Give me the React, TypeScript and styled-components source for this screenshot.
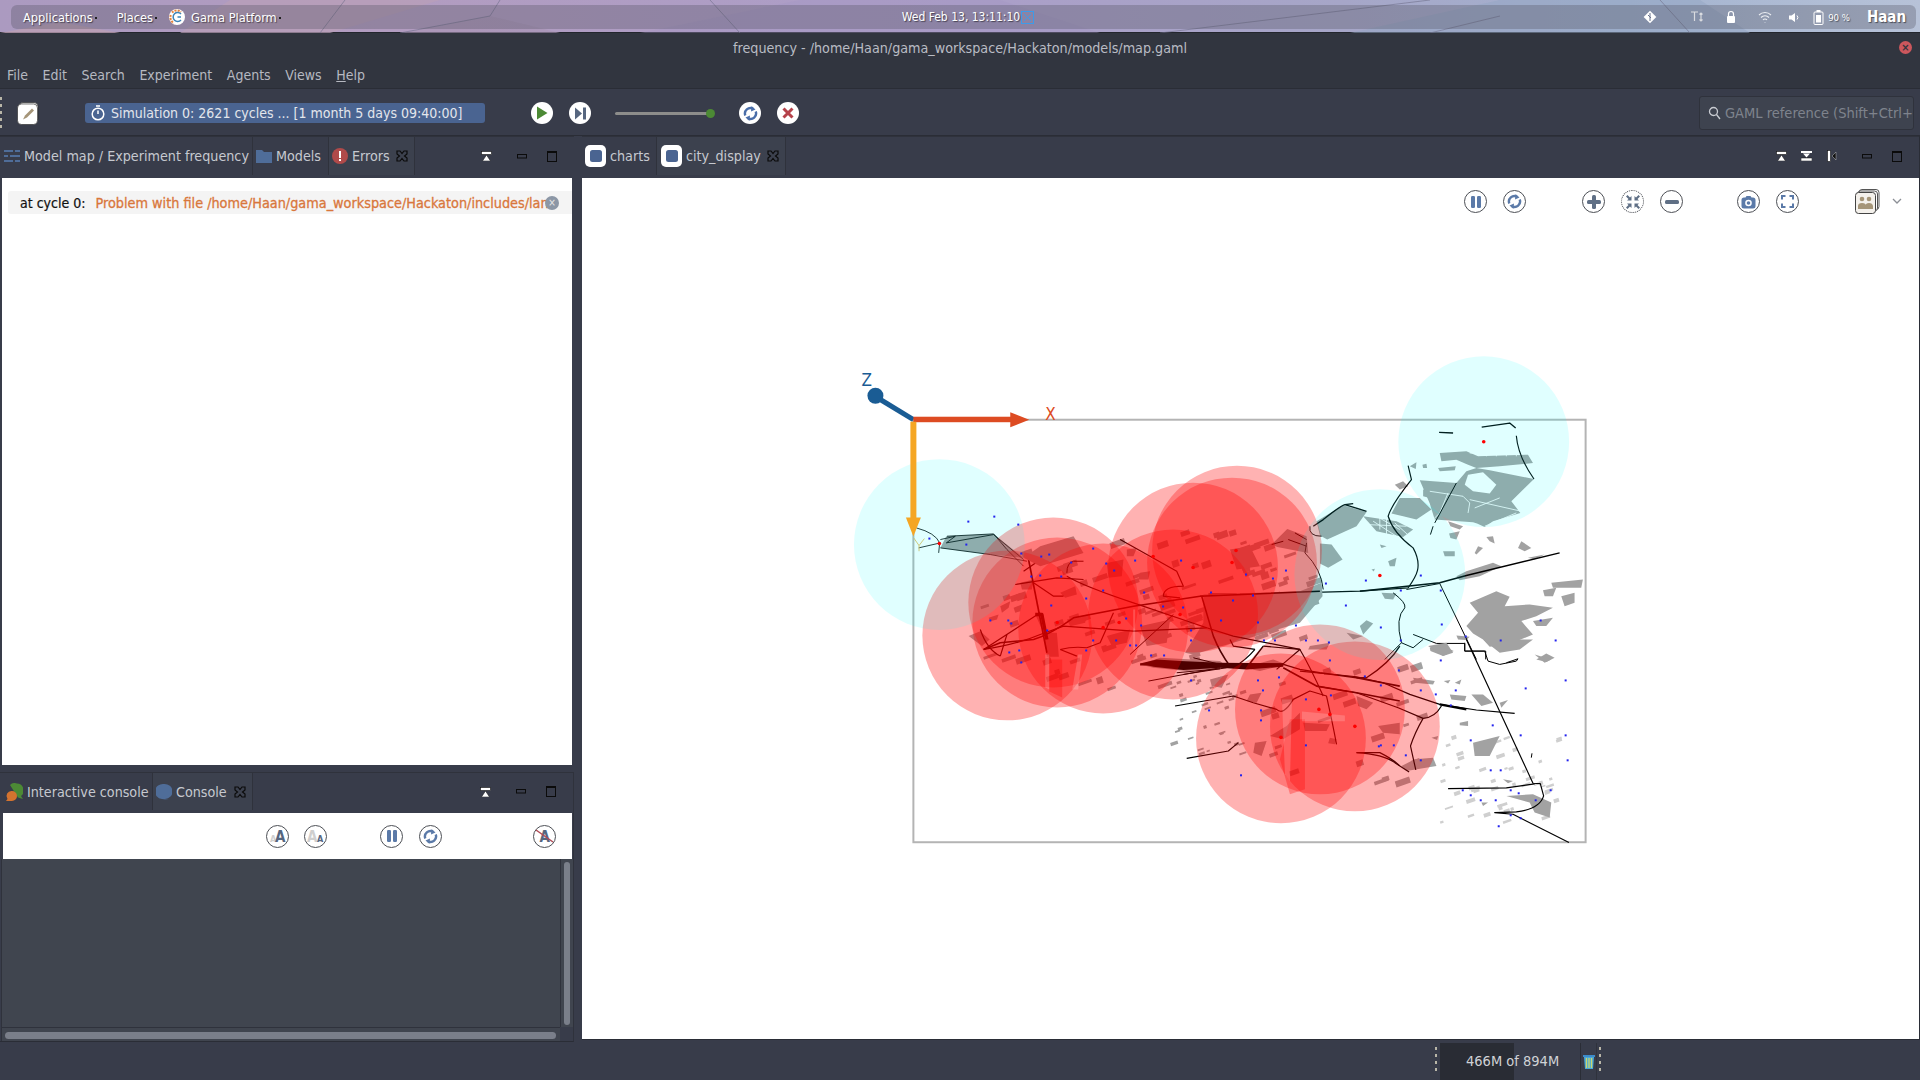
import React from 'react';
import styled, { createGlobalStyle } from 'styled-components';

const GlobalStyle = createGlobalStyle`
  * {
    box-sizing: border-box;
  }
  html, body {
    margin: 0;
    padding: 0;
    width: 1920px;
    height: 1080px;
    overflow: hidden;
    background: #383c4a;
  }
  body {
    font-family: "DejaVu Sans Condensed", "DejaVu Sans", sans-serif;
    font-stretch: condensed;
  }
  svg {
    flex: none;
  }
`;

const Page = styled.div`
  width: 1920px;
  height: 1080px;
  display: flex;
  flex-direction: column;
`;

/* ---------- desktop panel ---------- */

const DesktopBar = styled.div`
  position: relative;
  height: 33px;
  flex: none;
  padding: 5px 4px 4px 11px;
  background: linear-gradient(90deg, #ab9ac0 0%, #b29cc0 20%, #ab9ec8 50%, #a6a6c8 70%, #a3b3cf 85%, #b7c2d8 100%);
  border-bottom: 1px solid #23262d;
`;

const WallpaperLines = styled.svg`
  position: absolute;
  left: 0;
  top: 0;
`;

const DesktopPill = styled.div`
  position: relative;
  height: 24px;
  border-radius: 6px;
  background: rgba(75, 75, 90, 0.3);
  display: grid;
  grid-template-columns: 1fr auto 1fr;
  align-items: center;
  color: #fff;
  font-size: 12px;
  text-shadow: 1px 1px 1px rgba(0, 0, 0, 0.5);
`;

const DesktopLeft = styled.div`
  display: flex;
  align-items: center;
  padding-left: 12px;
  gap: 20px;
  font-size: 12.7px;
`;

const PanelMenu = styled.span`
  display: inline-flex;
  align-items: center;
  gap: 2px;
  &::after {
    content: '';
    width: 2px;
    height: 2px;
    margin-top: 2px;
    background: #222;
  }
`;

const GamaApp = styled.div`
  display: flex;
  align-items: center;
  gap: 6px;
  margin-left: -8px;
`;

const DesktopRight = styled.div`
  display: flex;
  justify-content: flex-end;
  align-items: center;
  padding-right: 10px;
`;

const UserName = styled.span`
  font-size: 15px;
  font-weight: 700;
  margin-left: 17px;
`;

const Percent = styled.span`
  font-size: 9.5px;
  margin-left: 4px;
`;

const TrayIcon = styled.svg<{ $gap?: number }>`
  margin-left: ${({ $gap }) => $gap ?? 0}px;
`;

const Clock = styled.div`
  display: flex;
  align-items: center;
  gap: 1px;
  margin-left: 9px;
`;

/* ---------- window chrome ---------- */

const TitleBar = styled.div`
  height: 29px;
  flex: none;
  position: relative;
  background: #31353f;
  color: #b9bcc4;
  font-size: 14.2px;
  display: flex;
  align-items: center;
  justify-content: center;
`;

const WindowClose = styled.div`
  position: absolute;
  right: 8px;
  top: 8px;
  width: 13px;
  height: 13px;
  border-radius: 50%;
  background: #cc575d;
  color: #31353f;
  font-size: 11px;
  font-weight: 700;
  line-height: 13px;
  text-align: center;
`;

const MenuBar = styled.div`
  height: 27px;
  flex: none;
  background: #31353f;
  border-bottom: 1px solid #2a2d36;
  display: flex;
  align-items: center;
  padding-left: 7px;
  gap: 14.6px;
  color: #b6b9c1;
  font-size: 14px;
`;

const MenuKey = styled.span`
  text-decoration: underline;
`;

const ToolBar = styled.div`
  height: 47px;
  flex: none;
  padding-top: 2px;
  background: #383c4a;
  border-bottom: 1px solid #2a2d36;
  display: flex;
  align-items: center;
  position: relative;
`;

const Handle = styled.div<{ $height: number }>`
  width: 2px;
  height: ${({ $height }) => $height}px;
  flex: none;
  background: repeating-linear-gradient(180deg, #b9b6a8 0 3px, transparent 3px 7px);
`;

const EditIcon = styled.svg`
  margin-left: 15px;
`;

const SimulationPill = styled.div`
  margin-left: 46px;
  width: 400px;
  height: 20px;
  border-radius: 3px;
  background: #4a6491;
  color: #e3e6ec;
  font-size: 14px;
  display: flex;
  align-items: center;
  padding-left: 6px;
  gap: 6px;
  white-space: nowrap;
`;

const PlayGroup = styled.div`
  display: flex;
  align-items: center;
  margin-left: 46px;
  gap: 16px;
`;

const RunControl = styled.div<{ $gap?: number }>`
  width: 22px;
  height: 22px;
  border-radius: 50%;
  background: #fff;
  display: flex;
  align-items: center;
  justify-content: center;
  margin-left: ${({ $gap }) => $gap ?? 0}px;
  flex: none;
`;

const Slider = styled.div`
  position: relative;
  width: 96px;
  height: 3px;
  margin: 0 28px 0 24px;
  background: #8d8d8b;
  border-radius: 2px;
  flex: none;
`;

const SliderThumb = styled.div`
  position: absolute;
  right: -4px;
  top: -3px;
  width: 9px;
  height: 9px;
  border-radius: 50%;
  background: #4c8a35;
`;

const SearchBox = styled.div`
  margin-left: auto;
  margin-right: 6px;
  width: 215px;
  height: 34px;
  background: #3e434f;
  border: 1px solid #2f323c;
  border-radius: 3px;
  display: flex;
  align-items: center;
  padding-left: 8px;
  gap: 4px;
  color: #7f838d;
  font-size: 14.5px;
  white-space: nowrap;
  overflow: hidden;
`;

/* ---------- work area ---------- */

const WorkArea = styled.div`
  flex: 1;
  display: flex;
  min-height: 0;
  background: #383c4a;
`;

const LeftColumn = styled.div`
  width: 574px;
  flex: none;
  display: flex;
  flex-direction: column;
`;

const RightColumn = styled.div`
  flex: 1;
  margin-left: 8px;
  display: flex;
  flex-direction: column;
  height: 904px;
  min-width: 0;
  border-right: 1px solid #2a2d36;
  border-bottom: 1px solid #2a2d36;
`;

const TabBar = styled.div<{ $height: number }>`
  height: ${({ $height }) => $height}px;
  padding-bottom: 3px;
  flex: none;
  display: flex;
  align-items: stretch;
  background: #383c4a;
  border-top: 1px solid #2f323c;
  color: #c6c9d0;
  font-size: 14.2px;
`;

const Tab = styled.div<{ $active?: boolean; $width: number; $pad?: number }>`
  width: ${({ $width }) => $width}px;
  flex: none;
  display: flex;
  align-items: center;
  gap: 4px;
  padding-left: ${({ $pad }) => $pad ?? 3}px;
  white-space: nowrap;
  border-right: 1px solid #2f323c;
  background: ${({ $active }) => ($active ? '#3c414e' : '#383c4a')};
`;

const TabClose = styled.svg`
  margin-left: auto;
  margin-right: 6px;
`;

const TabActions = styled.div`
  margin-left: auto;
  display: flex;
  align-items: center;
`;

const ActionSlot = styled.div<{ $width: number }>`
  width: ${({ $width }) => $width}px;
  display: flex;
  justify-content: center;
  flex: none;
`;

const ErrorPane = styled.div`
  height: 587px;
  flex: none;
  margin: 0 2px 0 2px;
  background: #fff;
  padding: 13px 0 0 6px;
  overflow: hidden;
`;

const ErrorRow = styled.div`
  position: relative;
  height: 23px;
  width: 570px;
  display: flex;
  align-items: center;
  background: #f4f4f4;
  border-radius: 3px;
  font-size: 14px;
  white-space: nowrap;
  padding-left: 12px;
`;

const CycleLabel = styled.span`
  color: #111;
  margin-right: 10px;
  -webkit-text-stroke: 0.2px #111;
`;

const ErrorText = styled.span`
  color: #d9773c;
  font-size: 14.3px;
  -webkit-text-stroke: 0.3px #d9773c;
`;

const ErrorClose = styled.div`
  position: absolute;
  left: 537px;
  top: 5px;
  width: 14px;
  height: 14px;
  border-radius: 50%;
  background: #8c97a6;
  color: #e7e7e7;
  font-size: 10px;
  line-height: 14px;
  text-align: center;
`;

const PaneGap = styled.div`
  height: 7px;
  flex: none;
`;

const ConsolePanel = styled.div`
  flex: none;
  height: 270px;
  display: flex;
  flex-direction: column;
  border-bottom: 1px solid #2a2d36;
  border-right: 1px solid #2f323c;
`;

const ConsoleTools = styled.div`
  height: 46px;
  flex: none;
  margin-left: 3px;
  margin-right: 1px;
  background: #fff;
  display: flex;
  align-items: center;
  padding-left: 263px;
`;

const ConsoleBody = styled.div`
  flex: 1;
  min-height: 0;
  margin-left: 1px;
  display: grid;
  grid-template-columns: 1fr 13px;
  grid-template-rows: 1fr 14px;
  background: #40454f;
  border-left: 1px solid #2f323c;
`;

const ScrollV = styled.div`
  border-left: 1px solid #2f323c;
  padding: 3px 3px 2px;
`;

const ScrollH = styled.div`
  border-top: 1px solid #2f323c;
  padding: 4px 4px 2px 3px;
`;

const ScrollThumb = styled.div`
  width: 100%;
  height: 100%;
  border-radius: 4px;
  background: #7a7f8a;
`;

const ScrollCorner = styled.div`
  background: #383c4a;
`;

const CanvasPane = styled.div`
  flex: 1;
  min-height: 0;
  position: relative;
  background: #fff;
`;

const MapSvg = styled.svg`
  display: block;
  width: 100%;
  height: 100%;
`;

const CanvasTools = styled.div`
  position: absolute;
  top: 11px;
  right: 17px;
  display: flex;
  align-items: center;
  gap: 54px;
`;

const ToolGroup = styled.div<{ $gap?: number; $ml?: number }>`
  display: flex;
  align-items: center;
  gap: ${({ $gap }) => $gap ?? 16}px;
  margin-left: ${({ $ml }) => $ml ?? 0}px;
`;

const RoundButton = styled.div<{ $dim?: boolean }>`
  width: 23px;
  height: 23px;
  border-radius: 50%;
  border: 1px solid #4d5056;
  border-style: ${({ $dim }) => ($dim ? 'dotted' : 'solid')};
  background: #fff;
  display: flex;
  align-items: center;
  justify-content: center;
  flex: none;
`;

const Chevron = styled.svg`
  margin-left: -42px;
`;

/* ---------- status bar ---------- */

const StatusBar = styled.div`
  flex: none;
  height: 38px;
  display: flex;
  align-items: center;
  justify-content: flex-end;
  padding-right: 319px;
  background: #383c4a;
`;

const MemoryBox = styled.div`
  width: 141px;
  height: 37px;
  margin-left: 3px;
  padding-left: 26px;
  display: flex;
  align-items: center;
  background: linear-gradient(90deg, #292c34 0 74px, #383c4a 74px);
  border-right: 1px solid #2a2d36;
  color: #d0d2d6;
  font-size: 14.5px;
`;

const TrashBox = styled.div`
  width: 16px;
  height: 37px;
  display: flex;
  align-items: center;
  justify-content: center;
  border-right: 1px solid #2f323c;
  margin-right: 2px;
`;

/* ---------- small drawings ---------- */

const TabX = () => (
  <TabClose width="12" height="12" viewBox="0 0 12 12" fill="none" stroke="#0b0b0b" strokeWidth="1.200">
    <path d="M1 1h3l2 2.500L8 1h3v3L8.500 6 11 8v3H8L6 8.500 4 11H1V8l2.500-2L1 4z" />
  </TabClose>
);

const ViewMenuIcon = ({ flip }: { flip?: boolean }) => (
  <svg width="11" height="10" viewBox="0 0 11 10">
    {flip ? (
      <g>
        <rect x="0" y="0" width="11" height="2" fill="#fff" />
        <path d="M2 2.500h7L5.500 6.500z" fill="#fff" />
        <rect x="0" y="7" width="11" height="3" fill="#fff" stroke="#111" strokeWidth="0.500" />
      </g>
    ) : (
      <g>
        <rect x="0.500" y="0.500" width="10" height="3" fill="#fff" stroke="#111" strokeWidth="0.600" />
        <path d="M5.500 4l4 6h-8z" fill="#fff" stroke="#111" strokeWidth="0.500" />
      </g>
    )}
  </svg>
);

const SideIcon = () => (
  <svg width="10" height="12" viewBox="0 0 10 12">
    <rect x="0.500" y="0.500" width="3" height="11" fill="#fff" stroke="#111" strokeWidth="0.600" />
    <path d="M9 2v8L5 6z" fill="#111" stroke="#ddd" strokeWidth="0.400" />
  </svg>
);

const MinIcon = () => (
  <svg width="10" height="5" viewBox="0 0 10 5"><rect x="0.500" y="0.500" width="9" height="3.500" fill="none" stroke="#0b0b0b" /></svg>
);

const MaxIcon = () => (
  <svg width="10" height="11" viewBox="0 0 10 11">
    <rect x="0.500" y="0.500" width="9" height="10" fill="none" stroke="#0b0b0b" />
    <rect x="0.500" y="0.500" width="9" height="1.500" fill="#0b0b0b" />
  </svg>
);

const PanelActions = () => (
  <TabActions>
    <ActionSlot $width={42}><ViewMenuIcon /></ActionSlot>
    <ActionSlot $width={30}><MinIcon /></ActionSlot>
    <ActionSlot $width={30}><MaxIcon /></ActionSlot>
    <ActionSlot $width={7} />
  </TabActions>
);

const ViewSquare = () => (
  <svg width="21" height="22" viewBox="0 0 21 22">
    <rect width="21" height="22" rx="5" fill="#fff" />
    <rect x="5" y="5" width="12" height="12" rx="2.500" fill="#4a6491" />
  </svg>
);

const PauseIcon = () => (
  <svg width="12" height="14" viewBox="0 0 12 14">
    <rect x="1" y="1" width="4" height="12" rx="1.200" fill="#5b7aa8" />
    <rect x="7" y="1" width="4" height="12" rx="1.200" fill="#5b7aa8" />
  </svg>
);

const ReloadIcon = ({ size = 15, color = '#5b7aa8' }: { size?: number; color?: string }) => (
  <svg width={size} height={size} viewBox="0 0 15 15">
    <path d="M2.300 9.500A5.500 5.500 0 0 1 10 2.700" fill="none" stroke={color} strokeWidth="2.400" />
    <path d="M12.700 5.500A5.500 5.500 0 0 1 5 12.300" fill="none" stroke={color} strokeWidth="2.400" />
    <path d="M8.500 0L12.500 3.500L8 5.500z" fill={color} />
    <path d="M6.500 15L2.500 11.500L7 9.500z" fill={color} />
  </svg>
);

const FitIcon = () => (
  <svg width="16" height="16" viewBox="0 0 16 16" fill="#5f6f85">
    <path d="M1 2.500L2.500 1L5 3.500L6.500 2V6.500H2L3.500 5zM15 2.500L13.500 1L11 3.500L9.500 2V6.500H14L12.500 5zM1 13.500L2.500 15L5 12.500L6.500 14V9.500H2L3.500 11zM15 13.500L13.500 15L11 12.500L9.500 14V9.500H14L12.500 11z" />
  </svg>
);

const SignIcon = ({ plus }: { plus?: boolean }) => (
  <svg width="16" height="16" viewBox="0 0 16 16" fill="#5f6f85">
    <rect x="1" y="6" width="14" height="4" rx="1.500" />
    {plus && <rect x="6" y="1" width="4" height="14" rx="1.500" />}
  </svg>
);

const CameraIcon = () => (
  <svg width="15" height="14" viewBox="0 0 15 14">
    <path d="M3 2.500h1.500L5.500 1h4l1 1.500H12a2.500 2.500 0 0 1 2.500 2.500v6a2.500 2.500 0 0 1-2.500 2.500H3A2.500 2.500 0 0 1 .5 11V5A2.500 2.500 0 0 1 3 2.500z" fill="#5b7aa8" />
    <circle cx="7.500" cy="8" r="3.300" fill="#fff" />
    <circle cx="7.500" cy="8" r="1.800" fill="#5b7aa8" />
  </svg>
);

const FullIcon = () => (
  <svg width="13" height="13" viewBox="0 0 13 13" fill="none" stroke="#5b7aa8" strokeWidth="2">
    <path d="M1 4.500V1h3.500M8.500 1H12v3.500M12 8.500V12H8.500M4.500 12H1V8.500" />
  </svg>
);

const LayersIcon = () => (
  <svg width="25" height="25" viewBox="0 0 25 25">
    <rect x="4" y="0.500" width="20" height="20" rx="3" fill="#fff" stroke="#555" />
    <rect x="2.500" y="2" width="20" height="20" rx="3" fill="#fff" stroke="#555" />
    <rect x="0.500" y="3.500" width="20" height="21" rx="3" fill="#f4f1ec" stroke="#444" />
    <circle cx="7" cy="10" r="2.300" fill="#a59578" />
    <circle cx="14" cy="10" r="2.300" fill="#a59578" />
    <path d="M3 20v-3q0-3 4-3t4 3v3zM10.500 20v-3q0-3 3.500-3t4 3v3z" fill="#a59578" />
  </svg>
);

const LetterButton = ({ variant }: { variant: 'grow' | 'shrink' | 'strike' }) => (
  <RoundButton>
    <svg width="19" height="17" viewBox="0 0 19 17" fontFamily="DejaVu Sans Condensed" fontWeight="700">
      {variant === 'grow' && (
        <g>
          <text x="2" y="14" fontSize="9" fill="#cfcfcf">A</text>
          <text x="7" y="14" fontSize="15" fill="#56667f">A</text>
        </g>
      )}
      {variant === 'shrink' && (
        <g>
          <text x="1" y="14" fontSize="15" fill="#cfcfcf">A</text>
          <text x="11" y="14" fontSize="9" fill="#56667f">A</text>
        </g>
      )}
      {variant === 'strike' && (
        <g>
          <text x="4.500" y="14" fontSize="15" fill="#56667f">A</text>
          <path d="M1 2l17 12" stroke="#b04a55" strokeWidth="1.500" />
        </g>
      )}
    </svg>
  </RoundButton>
);

/* ---------- map data, traced in 3x crop coordinates ---------- */

const NE_BLOCKS = [
  '720,340 800,335 835,350 985,345 1000,370 900,380 830,385 805,375 770,360 725,365',
  '660,422 770,430 800,395 830,385 870,392 1003,418 935,485 962,520 880,545 855,562 832,552 820,548 705,540 690,492',
  '715,385 768,380 765,392 720,395',
  '668,375 680,372 682,385 670,385',
  '630,380 650,368 648,388',
  '600,475 660,475 695,510 650,540 610,530 575,522',
  '350,545 430,497 500,517 470,560 382,600 360,588',
  '490,530 590,545 640,570 610,592 530,575',
  '360,612 395,615 428,660 385,685 360,672',
  '262,568 320,590 325,640 232,622 215,615',
  '585,435 610,425 625,440 600,450',
  '565,665 590,655 585,680 570,680',
  '745,545 790,560 780,570 752,560',
  '748,582 780,575 770,600 752,595',
  '730,635 765,635 765,650 735,650',
  '825,640 835,620 850,625 830,645',
  '860,592 880,590 885,612 870,605',
  '955,625 965,605 995,625 975,635',
  '770,710 800,695 880,670 905,680 840,710 780,722',
  '810,790 890,755 930,772 915,800 990,795 1060,805 1010,830 965,845 1000,885 940,910 870,922 850,900 820,882 800,860 835,820',
  '1055,730 1150,720 1145,745 1060,745',
  '1030,752 1070,745 1060,770 1035,770',
  '1085,770 1125,760 1125,790 1095,800',
  '1000,845 1060,835 1040,860 1010,860',
  '690,925 720,915 762,935 730,950 692,935',
  '770,888 810,892 800,902 775,900',
  '545,760 590,762 580,780 555,778',
  '480,860 500,842 520,852 490,885',
  '985,655 1035,645 1005,660',
  '1010,960 1040,942 1065,955 1040,968',
  '515,690 525,688 522,696',
  '540,615 560,620 545,625',
  '670,450 695,455 690,475 670,470',
];

const NE_WHITE = [
  'M690,455 L790,470 L810,490 L805,520 M810,480 L965,515 M745,460 L720,520 L700,540',
  'M720,325 L990,325 M810,340 L960,345 M860,315 V350 M890,315 V350 M920,320 V350 M950,320 V350',
  'M530,530 L600,570 M520,545 L590,590 M540,520 V570 M560,520 V590 M500,555 L620,560',
  'M900,475 L825,505 M855,560 L950,520 M585,550 L640,600',
];

const NE_WHITE_PATCH = '805,405 850,398 890,435 870,462 820,455 795,435';

const NE_ROADS: [string, number][] = [
  ['M625,378 L635,420 Q575,495 565,530 Q580,580 640,625 C670,680 650,710 625,745 L480,755 L370,758 L340,758', 3.5],
  ['M340,560 L370,540 Q420,500 435,495 L460,492 M435,495 L500,515', 4],
  ['M330,560 Q325,590 365,590 M320,610 L315,640 Q365,690 370,750', 3],
  ['M770,430 L705,550 M700,560 L692,585', 3],
  ['M950,288 Q955,350 1003,418', 3.5],
  ['M846,262 L930,250 L948,265 M718,278 L760,280', 4],
  ['M0,770 L340,758 M480,755 L720,730 L800,708 L1080,640', 4.5],
  ['M620,750 L720,732 L830,960', 3],
  ['M580,760 Q620,790 615,805 Q585,835 605,910 L640,925 L670,900 M640,885 L710,912 L795,912 L795,935 L858,935 L858,960 M605,910 L555,960', 3],
  ['M25,765 H110 M120,765 H225 M230,765 H300', 6],
  ['M215,615 L250,605 M265,600 L320,620 M285,580 L320,600', 3],
];

const CENTER_BLOCKS = [
  '910,165 1200,155 1265,130 1268,170 1200,250 1000,310 880,345 855,340 910,250',
  '405,225 430,225 436,280 470,280 476,352 440,352 430,280',
  '240,275 268,300 245,320 205,290',
  '435,25 500,0 470,40 440,50',
  '300,200 330,185 325,205 305,220',
  '340,205 365,195 360,215 345,220',
  '265,235 295,225 290,240 270,245',
  '480,160 525,140 530,165 495,175',
  '500,240 560,225 555,250 510,260',
  '620,290 690,270 680,310 635,320',
  '720,260 810,240 800,310 740,320',
  '990,30 1050,20 1080,80 1010,90',
  '620,70 670,60 665,110 625,115',
  '680,30 710,25 700,50 680,50',
  '720,100 750,95 745,120 715,120',
  '360,130 400,120 395,150 365,150',
  '720,375 780,355 960,365 985,385 860,395 760,385',
  '1030,385 1120,360 1160,375 1080,395',
  '1050,465 1085,460 1070,490 1040,485',
  '1110,590 1160,560 1200,520 1200,570 1150,600',
  '1210,550 1290,555 1280,575 1215,575',
  '1065,610 1100,605 1085,650 1060,640',
  '1230,320 1290,310 1280,330 1225,330',
  '1340,280 1390,290 1360,300',
  '1370,470 1420,490 1400,510 1375,500',
  '1435,560 1500,550 1500,585 1450,580',
  '1290,595 1310,600 1305,615 1285,612',
  '930,420 985,405 965,445 935,440',
];

const CENTER_MASS = '720,372 770,360 840,365 960,370 1150,372 1150,382 1040,390 960,385 850,392 760,382';

const CENTER_ROADS: [string, number][] = [
  ['M250,330 L300,310 L400,300 Q450,285 520,235 L700,200 L900,170 L1260,155', 4.5],
  ['M385,60 L440,340', 5],
  ['M405,225 L425,225 L440,300', 10],
  ['M240,270 Q260,330 300,350 M250,330 L420,220', 3.5],
  ['M345,135 L470,115 L550,120 M400,130 L460,170 L490,170 M370,95 L500,5', 3.5],
  ['M480,330 L530,350 M480,330 Q520,320 560,325 L600,310 L640,220 M300,350 L320,285', 3.5],
  ['M250,330 Q350,315 420,285 L490,260 L700,275 L920,265', 3.5],
  ['M500,110 Q550,140 700,190 L920,265 L1000,290 L1200,330 Q1230,380 1270,470', 3.5],
  ['M905,170 L940,290 Q960,340 990,380 L1040,385 L1090,320', 4.5],
  ['M660,0 L830,95 L850,140 Q790,140 790,170 L840,175', 3.5],
  ['M820,225 L690,345 M500,100 Q500,70 520,65 L550,65', 3],
  ['M720,375 L1150,375', 7],
  ['M745,425 L960,385 M880,355 L1000,385 M830,400 L960,388 M850,405 L980,385', 3],
  ['M825,500 L1000,470 L1060,490 L1130,510 Q1150,530 1180,480 L1230,455 L1280,470 Q1300,560 1310,615', 3.5],
  ['M860,657 L985,635 L1015,610 M1370,640 L1440,640 Q1480,660 1500,680', 3.5],
  ['M1150,375 L1200,390 L1260,400 L1370,415 L1400,415 Q1470,370 1500,320', 4],
  ['M1150,385 L1250,440 L1370,460 L1500,485 M1370,415 L1500,440', 5],
  ['M1065,330 Q1040,360 1000,385 M1090,320 L1200,330 L1130,390 M990,300 L1000,320 L1065,330', 3.5],
];

const SE_BLOCKS = [
  '340,115 405,125 400,135 345,130',
  '432,125 452,122 445,132',
  '465,130 485,120 480,135',
  '450,165 500,170 495,185 455,180',
  '515,165 550,165 580,190 545,200',
  '600,190 625,182 605,205',
  '480,250 505,245 505,260 480,258',
  '520,310 600,290 570,350 525,350',
  '395,295 415,290 412,302',
  '345,360 400,355 410,380 320,395 305,380',
  '610,420 640,425 625,432',
  '620,470 700,465 755,490 750,535 705,520 690,490',
  '545,490 565,490 550,500',
  '385,20 440,10 460,40 430,50',
  '550,0 700,0 660,30 600,40',
  '705,45 755,60 735,70',
];

const SE_ROADS: [string, number][] = [
  ['M0,95 L170,112 L250,130 L330,165 L420,195 L530,212 L645,222', 3.5],
  ['M420,195 L500,210', 7],
  ['M425,200 Q405,235 370,237 L295,205 L170,160 L50,140 M370,237 Q345,280 332,320 L348,392', 3.5],
  ['M170,340 Q250,345 285,370 L328,398', 3.5],
  ['M500,0 L700,432 L722,433 L732,470 Q720,510 650,518 L585,520 L640,525 L808,610', 3.5],
  ['M445,448 L620,446 L705,434', 3.5],
  ['M495,10 V35 L555,35 L565,65 L600,75 L650,65 L655,58 L620,70', 3],
  ['M697,342 L695,355', 3],
];

// small lots scattered over a zone, same result on every render
const scatter = (seed: number, count: number, x: number, y: number, w: number, h: number, size: number) => {
  let s = seed;
  const next = () => {
    s = (s * 16807) % 2147483647;
    return s / 2147483647;
  };
  return Array.from({ length: count }, () => {
    const px = x + next() * w;
    const py = y + next() * h;
    const a = size * (0.5 + next());
    const b = size * (0.25 + next() * 0.4);
    return `${px},${py} ${px + a},${py - a * 0.35} ${px + a + b * 0.3},${py - a * 0.35 + b} ${px + b * 0.3},${py + b}`;
  });
};

const LOTS = [
  ...scatter(11, 60, 980, 540, 210, 150, 10),
  ...scatter(23, 45, 1180, 530, 130, 110, 10),
  ...scatter(37, 40, 1170, 670, 70, 85, 5),
  ...scatter(41, 25, 1260, 665, 160, 120, 10),
];

const PALE_LOTS = scatter(53, 50, 1440, 730, 120, 95, 6);

const BLUE_DOTS = [
  [928, 538], [967, 521], [965, 544], [993, 516], [1017, 524], [1048, 554], [1020, 553], [1040, 556], [1039, 575], [1060, 576], [1010, 623], [1030, 576], [1070, 562], [1092, 548], [1105, 563], [1113, 570], [1143, 592], [1180, 560], [1134, 560], [1102, 590], [1085, 598], [1125, 618], [1140, 625], [1162, 606], [1210, 592], [1182, 607],
  [989, 620], [1007, 620], [1018, 650], [1008, 652], [1050, 605], [1046, 630], [1020, 662], [1085, 650], [1115, 640], [1135, 645], [1163, 655], [1190, 630], [1220, 620], [1232, 600], [1245, 574], [1252, 595], [1272, 578], [1285, 570], [1295, 625], [1329, 660], [1317, 640], [1345, 605], [1400, 590], [1420, 575], [1365, 580], [1325, 583], [1380, 627], [1364, 676], [1440, 590], [1465, 636], [1441, 624],
  [1129, 645], [1150, 655], [1190, 640], [1257, 622], [1263, 640], [1274, 640], [1305, 640], [1328, 642], [1278, 677], [1262, 690], [1257, 680], [1260, 710], [1305, 699], [1330, 695], [1380, 685], [1398, 670], [1435, 694], [1400, 640],
  [1092, 640], [1190, 680], [1260, 720], [1208, 710], [1240, 775], [1305, 745], [1393, 745], [1440, 660], [1420, 690], [1500, 640], [1540, 620], [1555, 640], [1525, 688], [1565, 680], [1492, 725], [1520, 735], [1565, 735], [1567, 760], [1470, 740], [1495, 800], [1490, 770], [1550, 790], [1480, 800], [1510, 815], [1535, 800], [1455, 690], [1420, 760], [1378, 746], [1380, 745], [1405, 755], [1450, 705], [1500, 770], [1510, 790], [1518, 793], [1462, 790], [1470, 795], [1520, 818], [1498, 826],
];

const RED_DOTS = [
  [939, 544], [1236, 551], [1232, 563], [1193, 568], [1153, 557], [1180, 615], [1103, 628], [1057, 623], [1119, 623], [1281, 738], [1319, 710], [1355, 727], [1330, 715], [1380, 576], [1484, 442],
];

const RED_CIRCLES = [
  [1007, 636], [1103, 629], [1057, 623], [1053, 603], [1173, 615], [1237, 551], [1232, 563], [1193, 568], [1281, 739], [1320, 710], [1355, 727],
];

const RED_WEDGES = [
  '1049,660 1062,660 1062,698 1049,692',
  '1280,760 1290,720 1305,720 1305,790 1290,795',
];

const LIGHT_STRIPS = [
  '1045,655 1049,655 1049,690 1045,688',
  '1133,610 1135,610 1135,650 1133,650',
  '1078,655 1082,655 1078,690 1072,690',
  '1282,700 1292,700 1290,782 1285,775',
  '1302,712 1345,716 1345,722 1302,722',
];

const CYAN_CIRCLES = [
  [939, 545], [1380, 575], [1484, 442],
];

const CropGroup = ({ x, y, children }: { x: number; y: number; children: React.ReactNode }) => (
  <g transform={`translate(${x} ${y}) scale(0.3333)`}>{children}</g>
);

const RoadLayer = ({ roads }: { roads: [string, number][] }) => (
  <g fill="none" stroke="#000" strokeLinejoin="round">
    {roads.map(([d, w]) => <path key={`${d}-${w}`} d={d} strokeWidth={w} />)}
  </g>
);

const BlockLayer = ({ blocks }: { blocks: string[] }) => (
  <g fill="#a2a2a2">
    {blocks.map((p) => <polygon key={p} points={p} />)}
  </g>
);

const CityMap = () => (
  <MapSvg viewBox="582 178 1337 862">
    <rect x="913" y="420" width="673" height="423" fill="none" stroke="#b4b4b4" strokeWidth="2" />
    <g fill="#a2a2a2">
      {LOTS.map((p) => <polygon key={p} points={p} />)}
    </g>
    <g fill="#cfcfcf">
      {PALE_LOTS.map((p) => <polygon key={p} points={p} />)}
    </g>
    <CropGroup x={1200} y={340}>
      <BlockLayer blocks={NE_BLOCKS} />
      <polygon points={NE_WHITE_PATCH} fill="#fff" />
      <g fill="none" stroke="#fff" strokeWidth="2.500">
        {NE_WHITE.map((d) => <path key={d} d={d} />)}
      </g>
      <RoadLayer roads={NE_ROADS} />
    </CropGroup>
    <CropGroup x={900} y={540}>
      <BlockLayer blocks={CENTER_BLOCKS} />
      <polygon points={CENTER_MASS} fill="#000" />
      <RoadLayer roads={CENTER_ROADS} />
    </CropGroup>
    <CropGroup x={1300} y={640}>
      <BlockLayer blocks={SE_BLOCKS} />
      <RoadLayer roads={SE_ROADS} />
    </CropGroup>
    <CropGroup x={840} y={340}>
      <polygon points="300,625 318,590 460,583 550,655 450,645" fill="#a2a2a2" />
      <polygon points="550,655 600,620 700,590 730,640 600,680" fill="#a2a2a2" />
      <path d="M228,565 Q285,580 298,610 L295,640 M300,610 L235,625 M300,600 L345,590 L318,610 L460,585 L550,660" fill="none" stroke="#000" strokeWidth="2.500" />
      <path d="M320,590 L460,583 L500,630 L550,680 M300,625 L450,645 L560,665" fill="none" stroke="#000" strokeWidth="2.500" />
      <path d="M220,595 L236,618 L252,597 M236,618 V635" fill="none" stroke="#e6b84e" strokeWidth="2.500" />
    </CropGroup>
    <g fill="rgba(255,0,0,0.3)">
      {RED_CIRCLES.map(([x, y]) => <circle key={`${x}-${y}`} cx={x} cy={y} r="85" />)}
      {RED_WEDGES.map((p) => <polygon key={p} points={p} />)}
    </g>
    <g fill="rgba(255,255,255,0.18)">
      {LIGHT_STRIPS.map((p) => <polygon key={p} points={p} />)}
    </g>
    <g fill="rgba(0,255,255,0.12)">
      {CYAN_CIRCLES.map(([x, y]) => <circle key={`${x}-${y}`} cx={x} cy={y} r="85.500" />)}
    </g>
    <g fill="#2222ee">
      {BLUE_DOTS.map(([x, y]) => <rect key={`${x}-${y}`} x={x} y={y} width="2" height="2" />)}
    </g>
    <g fill="#ff0000">
      {RED_DOTS.map(([x, y]) => <circle key={`${x}-${y}`} cx={x} cy={y} r="1.800" />)}
    </g>
    <path d="M913 420L877 398" stroke="#1a5c94" strokeWidth="5" />
    <circle cx="875" cy="396" r="8" fill="#1a5c94" />
    <text x="861" y="386" fontFamily="DejaVu Sans" fontSize="17" fill="#1a5c94">Z</text>
    <rect x="913" y="417" width="98" height="5.500" fill="#dd4b22" />
    <path d="M1010 412.500L1029 420L1010 427.500z" fill="#dd4b22" />
    <text x="1045" y="420" fontFamily="DejaVu Sans" fontSize="17" fill="#dd4b22">X</text>
    <rect x="910" y="422" width="6" height="97" fill="#f5a623" />
    <path d="M905.500 518h15L913 537z" fill="#f5a623" />
  </MapSvg>
);

const App = () => (
  <Page>
    <GlobalStyle />
    <DesktopBar>
      <WallpaperLines width="1920" height="33" viewBox="0 0 1920 33" fill="none">
        <polygon points="0,33 60,22 120,33" fill="#bda0b4" opacity="0.8" />
        <polygon points="230,0 440,0 330,33 180,33" fill="#b99fb8" opacity="0.7" />
        <polygon points="400,33 490,16 560,33" fill="#a894b4" opacity="0.6" />
        <polygon points="640,33 800,0 1000,0 1100,33" fill="#a296c4" opacity="0.35" />
        <polygon points="1350,33 1500,0 1700,0 1750,33" fill="#94a6c4" opacity="0.5" />
        <path d="M400 33L490 16M490 16L500 0M710 0L740 33M1160 33L1430 0M1660 0L1690 33M1500 16L1430 33M320 33L345 0" stroke="#6f6f8a" strokeWidth="1" opacity="0.6" />
      </WallpaperLines>
      <DesktopPill>
        <DesktopLeft>
          <PanelMenu>Applications</PanelMenu>
          <PanelMenu>Places</PanelMenu>
          <GamaApp>
            <svg width="16" height="16" viewBox="0 0 16 16" fill="none">
              <circle cx="8" cy="8" r="8" fill="#fff" />
              <path d="M3 3.500a6.500 6.500 0 0 1 9 -0.500" stroke="#e8833a" strokeWidth="2" strokeDasharray="2 1" />
              <path d="M1.800 6a6.500 6.500 0 0 0 3 8" stroke="#e8833a" strokeWidth="2" strokeDasharray="2 1" />
              <path d="M12 5a4.500 4.500 0 1 0 0 6M12 8H8.500" stroke="#3d84b8" strokeWidth="1.500" />
            </svg>
            <PanelMenu>Gama Platform</PanelMenu>
          </GamaApp>
        </DesktopLeft>
        <Clock>
          <span>Wed Feb 13, 13:11:10</span>
          <svg width="13" height="13" viewBox="0 0 13 13" fill="none" stroke="#3d9be9" strokeWidth="1">
            <rect x="0.500" y="0.500" width="12" height="12" />
            <path d="M3 3l7 7M10 3l-7 7" />
          </svg>
        </Clock>
        <DesktopRight>
          <TrayIcon width="14" height="14" viewBox="0 0 14 14">
            <rect x="2.500" y="2.500" width="9" height="9" transform="rotate(45 7 7)" fill="#fff" />
            <path d="M7 3v8M5 5l3 3" stroke="#67708a" strokeWidth="1" />
          </TrayIcon>
          <TrayIcon $gap={33} width="14" height="14" viewBox="0 0 14 14" fill="none" stroke="#d9dbe0" strokeWidth="1.200">
            <path d="M1 2h7M4.500 2v9M11 3v8M9.500 9.500L11 11l1.500-1.500M9.500 4.500L11 3l1.500 1.500" />
          </TrayIcon>
          <TrayIcon $gap={21} width="12" height="14" viewBox="0 0 12 14">
            <rect x="2" y="6" width="8" height="7" rx="1" fill="#fff" />
            <path d="M3.500 6V4a2.500 2.500 0 0 1 5 0v2" fill="none" stroke="#fff" strokeWidth="1.200" />
          </TrayIcon>
          <TrayIcon $gap={21} width="14" height="14" viewBox="0 0 14 14" fill="none" stroke="#eceef2" strokeWidth="1.100">
            <path d="M1 5a8.500 8.500 0 0 1 12 0M3 7.500a5.500 5.500 0 0 1 8 0M5 10a2.500 2.500 0 0 1 4 0M7 12.500v.5" />
          </TrayIcon>
          <TrayIcon $gap={16} width="13" height="13" viewBox="0 0 13 13" fill="none">
            <path d="M1 4.500h2.500L7 2v9L3.500 8.500H1z" fill="#fff" />
            <path d="M9 4.500a3 3 0 0 1 0 4" stroke="#fff" strokeWidth="1" />
          </TrayIcon>
          <TrayIcon $gap={12} width="11" height="15" viewBox="0 0 11 15">
            <rect x="3.500" y="0" width="4" height="2" fill="#fff" />
            <rect x="1" y="2" width="9" height="12.500" rx="1" fill="none" stroke="#fff" />
            <rect x="3" y="5" width="5" height="7.500" fill="#fff" />
          </TrayIcon>
          <Percent>90 %</Percent>
          <UserName>Haan</UserName>
        </DesktopRight>
      </DesktopPill>
    </DesktopBar>

    <TitleBar>
      frequency - /home/Haan/gama_workspace/Hackaton/models/map.gaml
      <WindowClose>×</WindowClose>
    </TitleBar>
    <MenuBar>
      <span>File</span>
      <span>Edit</span>
      <span>Search</span>
      <span>Experiment</span>
      <span>Agents</span>
      <span>Views</span>
      <span><MenuKey>H</MenuKey>elp</span>
    </MenuBar>
    <ToolBar>
      <Handle $height={33} />
      <EditIcon width="22" height="23" viewBox="0 0 22 23">
        <rect x="2" y="0.500" width="19" height="20" rx="4" fill="#e8e8e8" stroke="#222" strokeWidth="0.600" />
        <rect x="0.500" y="2" width="20" height="20.500" rx="4" fill="#fff" stroke="#222" strokeWidth="0.600" />
        <path d="M6 17.500l2-4 7-7 2 2-7 7z" fill="#a59578" />
      </EditIcon>
      <SimulationPill>
        <svg width="14" height="16" viewBox="0 0 14 16" fill="none" stroke="#fff" strokeWidth="1.500">
          <circle cx="7" cy="9" r="5.800" />
          <path d="M7 9V5.500M5 1h4" />
        </svg>
        Simulation 0: 2621 cycles ... [1 month 5 days 09:40:00]
      </SimulationPill>
      <PlayGroup>
        <RunControl>
          <svg width="12" height="14" viewBox="0 0 12 14"><path d="M1 0.500L11.500 7L1 13.500z" fill="#4c8a35" /></svg>
        </RunControl>
        <RunControl>
          <svg width="13" height="13" viewBox="0 0 13 13" fill="#56667f"><path d="M1 0.500L8 6.500L1 12.500z" /><rect x="9" y="0.500" width="3" height="12" /></svg>
        </RunControl>
      </PlayGroup>
      <Slider><SliderThumb /></Slider>
      <RunControl><ReloadIcon color="#4a6ea9" /></RunControl>
      <RunControl $gap={16}>
        <svg width="12" height="12" viewBox="0 0 12 12"><path d="M1.500 1.500L10.500 10.500M10.500 1.500L1.500 10.500" stroke="#b5424a" strokeWidth="3" /></svg>
      </RunControl>
      <SearchBox>
        <svg width="13" height="14" viewBox="0 0 13 14" fill="none" stroke="#c9ccd2" strokeWidth="1.300">
          <circle cx="5.500" cy="5.500" r="4" />
          <path d="M8.500 8.500L12 13" />
        </svg>
        GAML reference (Shift+Ctrl+
      </SearchBox>
    </ToolBar>

    <WorkArea>
      <LeftColumn>
        <TabBar $height={42}>
          <Tab $width={253} $pad={4}>
            <svg width="16" height="16" viewBox="0 0 16 16" stroke="#4f6d99" strokeWidth="2">
              <path d="M0 3h16M0 8h16M0 13h16" />
              <path d="M10 1v4M5 6v4M10 11v4" stroke="#383c4a" strokeWidth="2" />
            </svg>
            Model map / Experiment frequency
          </Tab>
          <Tab $width={76}>
            <svg width="16" height="14" viewBox="0 0 16 14"><path d="M0 1h6l2 2h8v11H0z" fill="#4f6d99" /></svg>
            Models
          </Tab>
          <Tab $width={86} $active>
            <svg width="16" height="16" viewBox="0 0 16 16">
              <circle cx="8" cy="8" r="8" fill="#b04a4a" />
              <rect x="7" y="3" width="2" height="7" fill="#fff" />
              <rect x="7" y="11" width="2" height="2" fill="#fff" />
            </svg>
            Errors
            <TabX />
          </Tab>
          <PanelActions />
        </TabBar>
        <ErrorPane>
          <ErrorRow>
            <CycleLabel>at cycle 0:</CycleLabel>
            <ErrorText>Problem with file /home/Haan/gama_workspace/Hackaton/includes/lan</ErrorText>
            <ErrorClose>×</ErrorClose>
          </ErrorRow>
        </ErrorPane>
        <PaneGap />
        <ConsolePanel>
          <TabBar $height={41}>
            <Tab $width={153} $pad={5}>
              <svg width="18" height="18" viewBox="0 0 18 18">
                <path d="M5 2a6.500 6.500 0 0 1 7-1.500A7 7 0 0 1 16 13l2 3-5-1.500z" fill="#4c8a35" />
                <path d="M7 8a5 5 0 0 1 0 10L1 18l1.500-2A5 5 0 0 1 7 8z" fill="#d4732f" />
              </svg>
              Interactive console
            </Tab>
            <Tab $width={100} $active>
              <svg width="16" height="17" viewBox="0 0 16 17">
                <path d="M8 1a8 7.500 0 0 1 1 15l4 1-7-1A8 7.500 0 0 1 8 1z" fill="#4f6d99" />
              </svg>
              Console
              <TabX />
            </Tab>
            <PanelActions />
          </TabBar>
          <ConsoleTools>
            <LetterButton variant="grow" />
            <ToolGroup $ml={15}><LetterButton variant="shrink" /></ToolGroup>
            <ToolGroup $ml={53}>
              <RoundButton><PauseIcon /></RoundButton>
              <RoundButton><ReloadIcon /></RoundButton>
            </ToolGroup>
            <ToolGroup $ml={91}><LetterButton variant="strike" /></ToolGroup>
          </ConsoleTools>
          <ConsoleBody>
            <div />
            <ScrollV><ScrollThumb /></ScrollV>
            <ScrollH><ScrollThumb /></ScrollH>
            <ScrollCorner />
          </ConsoleBody>
        </ConsolePanel>
      </LeftColumn>

      <RightColumn>
        <TabBar $height={42}>
          <Tab $width={75} $pad={3}>
            <ViewSquare />
            charts
          </Tab>
          <Tab $width={129} $pad={4} $active>
            <ViewSquare />
            city_display
            <TabX />
          </Tab>
          <TabActions>
            <ActionSlot $width={25}><ViewMenuIcon /></ActionSlot>
            <ActionSlot $width={25}><ViewMenuIcon flip /></ActionSlot>
            <ActionSlot $width={25}><SideIcon /></ActionSlot>
            <ActionSlot $width={8} />
            <ActionSlot $width={30}><MinIcon /></ActionSlot>
            <ActionSlot $width={30}><MaxIcon /></ActionSlot>
            <ActionSlot $width={7} />
          </TabActions>
        </TabBar>
        <CanvasPane>
          <CityMap />
          <CanvasTools>
            <ToolGroup>
              <RoundButton><PauseIcon /></RoundButton>
              <RoundButton><ReloadIcon /></RoundButton>
            </ToolGroup>
            <ToolGroup $ml={2}>
              <RoundButton><SignIcon plus /></RoundButton>
              <RoundButton $dim><FitIcon /></RoundButton>
              <RoundButton><SignIcon /></RoundButton>
            </ToolGroup>
            <ToolGroup>
              <RoundButton><CameraIcon /></RoundButton>
              <RoundButton><FullIcon /></RoundButton>
            </ToolGroup>
            <ToolGroup $ml={2}>
              <LayersIcon />
            </ToolGroup>
            <Chevron width="10" height="7" viewBox="0 0 10 7" fill="none" stroke="#8c8f96" strokeWidth="1.300">
              <path d="M1 1l4 4 4-4" />
            </Chevron>
          </CanvasTools>
        </CanvasPane>
      </RightColumn>
    </WorkArea>

    <StatusBar>
      <Handle $height={28} />
      <MemoryBox>466M of 894M</MemoryBox>
      <TrashBox>
        <svg width="12" height="15" viewBox="0 0 12 15">
          <rect x="0" y="1" width="12" height="2" fill="#3d8bc9" />
          <path d="M1 3h10l-1 12H2z" fill="#49a8d8" />
          <path d="M3.500 4v10M6 4v10M8.500 4v10" stroke="#cbd66c" strokeWidth="1.300" />
        </svg>
      </TrashBox>
      <Handle $height={28} />
    </StatusBar>
  </Page>
);

export default App;
